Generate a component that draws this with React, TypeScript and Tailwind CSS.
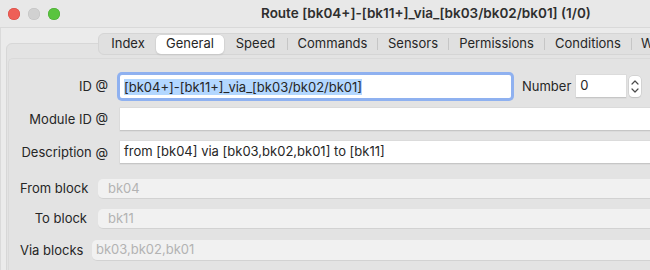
import React from 'react'

const tabs = [
  { name: 'Index', cls: 'w-[56px] justify-center' },
  { name: 'General', cls: 'w-[68px] justify-center', selected: true },
  { name: 'Speed', cls: 'w-[63px] justify-center' },
  { name: 'Commands', cls: 'w-[89px] justify-center', sep: true },
  { name: 'Sensors', cls: 'w-[70px] justify-center', sep: true },
  { name: 'Permissions', cls: 'w-[95px] justify-center', sep: true },
  { name: 'Conditions', cls: 'w-[86px] justify-center', sep: true },
  { name: 'Wires', cls: 'w-[70px] pl-[9px]', sep: true },
]

const Stepper = () => (
  <div className="flex h-[21px] w-[12px] flex-col items-center justify-center gap-[3px] rounded-[4px] bg-white shadow-[0_0_0_0.5px_#c4c4c4,0_1px_1px_rgba(0,0,0,0.15)]">
    <svg width="8" height="5" viewBox="0 0 8 5" fill="none" stroke="#4a4a4a" strokeWidth="1.2" strokeLinecap="round" strokeLinejoin="round">
      <path d="M1 4 L4 1 L7 4" />
    </svg>
    <svg width="8" height="5" viewBox="0 0 8 5" fill="none" stroke="#4a4a4a" strokeWidth="1.2" strokeLinecap="round" strokeLinejoin="round">
      <path d="M1 1 L4 4 L7 1" />
    </svg>
  </div>
)

const TextField = ({ value, className }: { value?: string; className?: string }) => (
  <div
    className={`flex h-[23px] items-center border-b border-[#c6c6c6] bg-white pl-[4px] shadow-[0_0_0_0.5px_#d4d4d4] ${className ?? ''}`}
  >
    {value}
  </div>
)

const DisabledField = ({ value, className }: { value: string; className?: string }) => (
  <div
    className={`flex flex-1 items-center rounded-l-[5px] border-b border-[#d2d2d2] bg-[#f1f1f1] text-[#b3b3b3] ${className ?? ''}`}
  >
    {value}
  </div>
)

export default function App() {
  return (
    <div className="h-[270px] w-[650px] overflow-hidden bg-[#ebebeb] font-['Inter','Liberation_Sans',Arial,sans-serif] text-[13px] text-[#262626]">
      {/* title bar */}
      <div className="flex h-[28px] items-center border-b border-[#d9d9d9] bg-[#e8e8e8]">
        <div className="flex gap-[8px] pl-[8px]">
          <span className="h-[12px] w-[12px] rounded-full bg-[#ee5f57] shadow-[inset_0_0_0_0.5px_#d5483f]" />
          <span className="h-[12px] w-[12px] rounded-full bg-[#d1d1d1] shadow-[inset_0_0_0_0.5px_#c0c0c0]" />
          <span className="h-[12px] w-[12px] rounded-full bg-[#5ac43f] shadow-[inset_0_0_0_0.5px_#46a82f]" />
        </div>
        <div className="ml-[201px] whitespace-nowrap text-[13.5px] font-semibold text-[#2e2e2e]">
          Route [bk04+]-[bk11+]_via_[bk03/bk02/bk01] (1/0)
        </div>
      </div>

      <div className="w-[760px] border-l border-[#dadada] pl-[4px] pt-[5px]">
        {/* tabs */}
        <div className="relative z-10 ml-[93px] flex h-[22px] items-center rounded-[6px] border border-[#d5d5d5] bg-[#e0e0e0] px-px">
          {tabs.map((t) => (
            <React.Fragment key={t.name}>
              {t.sep && <span className="h-[12px] w-px bg-[#c6c6c6]" />}
              <div
                className={`flex h-[19px] items-center whitespace-nowrap ${t.cls} ${
                  t.selected ? 'rounded-[5px] bg-white shadow-[0_0_0_0.5px_#cfcfcf,0_1px_2px_rgba(0,0,0,0.12)]' : ''
                }`}
              >
                {t.name}
              </div>
            </React.Fragment>
          ))}
        </div>

        {/* panel */}
        <div className="-mt-[12px] ml-[1px] h-[260px] rounded-[6px] border border-[#d7d7d7] bg-[#e3e3e3]">
          <div className="ml-px mt-[14px] h-[240px] rounded-tl-[5px] border-l border-t border-[#dadada]">
            {/* ID */}
            <div className="mt-[16px] flex h-[23px] items-center">
              <div className="w-[100px] pr-px text-right">ID @</div>
              <div className="ml-[11px] flex h-[23px] w-[391px] items-center rounded-[2px] bg-white pl-[4px] ring-[3px] ring-[#8fb1f0]">
                <span className="bg-[#b3d7ff] leading-[16px]">[bk04+]-[bk11+]_via_[bk03/bk02/bk01]</span>
              </div>
              <div className="ml-[11px]">Number</div>
              <TextField value="0" className="ml-[5px] h-[22px] w-[50px]" />
              <div className="ml-[3px]">
                <Stepper />
              </div>
            </div>
            {/* Module ID */}
            <div className="mt-[10px] flex items-center">
              <div className="w-[100px] pr-px text-right">Module ID @</div>
              <TextField className="ml-[11px] flex-1" />
            </div>
            {/* Description */}
            <div className="mt-[10px] flex items-center">
              <div className="w-[100px] pr-px text-right">Description @</div>
              <TextField value="from [bk04] via [bk03,bk02,bk01] to [bk11]" className="ml-[11px] flex-1" />
            </div>
            {/* From block */}
            <div className="mt-[15px] flex h-[20px] items-stretch">
              <div className="flex w-[89px] items-center pl-[11px]">From block</div>
              <DisabledField value="bk04" className="pl-[10px]" />
            </div>
            {/* To block */}
            <div className="mt-[10px] flex h-[20px] items-stretch">
              <div className="flex w-[89px] items-center justify-end pr-[11px]">To block</div>
              <DisabledField value="bk11" className="pl-[10px]" />
            </div>
            {/* Via blocks */}
            <div className="mt-[11px] flex h-[21px] items-stretch">
              <div className="flex w-[83px] items-center pl-[11px]">Via blocks</div>
              <DisabledField value="bk03,bk02,bk01" className="rounded-l-[2px] pl-[4px]" />
            </div>
          </div>
        </div>
      </div>
    </div>
  )
}
